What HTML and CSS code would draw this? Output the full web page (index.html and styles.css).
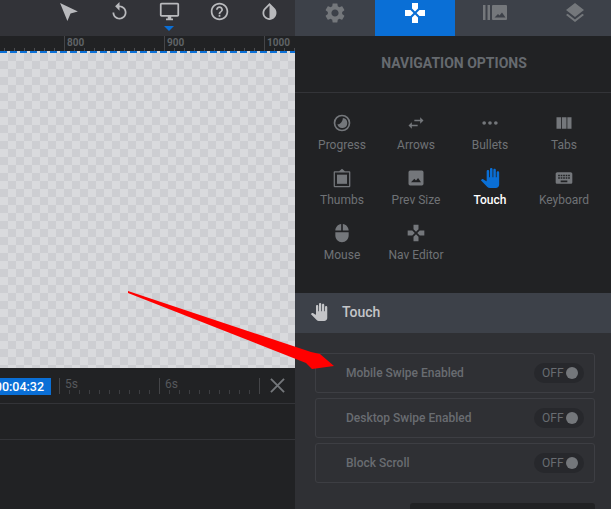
FILE: index.html
```html
<!DOCTYPE html>
<html lang="en">
<head>
    <meta charset="UTF-8">
    <title>Navigation Options</title>
    <link rel="stylesheet" href="styles.css">
</head>
<body>
<div class="app">
    <div class="stage">
        <div class="toolbar">
            <div class="tool"><svg viewBox="0 0 20 20"><polygon points="1,2 18,10 11,12 8,19"/></svg></div>
            <div class="tool"><svg viewBox="0 0 24 24"><path d="M12 5V1L7 6l5 5V7c3.31 0 6 2.69 6 6s-2.69 6-6 6-6-2.69-6-6H4c0 4.42 3.58 8 8 8s8-3.58 8-8-3.58-8-8-8z"/></svg></div>
            <div class="tool tool-active"><svg viewBox="0 0 24 24"><path d="M21 2H3c-1.1 0-2 .9-2 2v12c0 1.1.9 2 2 2h7v2H8v2h8v-2h-2v-2h7c1.1 0 2-.9 2-2V4c0-1.1-.9-2-2-2zm0 14H3V4h18v12z"/></svg></div>
            <div class="tool"><svg viewBox="0 0 24 24"><path d="M11 18h2v-2h-2v2zm1-16C6.48 2 2 6.48 2 12s4.48 10 10 10 10-4.48 10-10S17.52 2 12 2zm0 18c-4.41 0-8-3.59-8-8s3.59-8 8-8 8 3.59 8 8-3.59 8-8 8zm0-14c-2.21 0-4 1.79-4 4h2c0-1.1.9-2 2-2s2 .9 2 2c0 2-3 1.75-3 5h2c0-2.25 3-2.5 3-5 0-2.21-1.79-4-4-4z"/></svg></div>
            <div class="tool"><svg viewBox="0 0 24 24"><path d="M17.66 7.93L12 2.27 6.34 7.93c-3.12 3.12-3.12 8.19 0 11.31C7.9 20.8 9.95 21.58 12 21.58c2.05 0 4.1-.78 5.66-2.34 3.12-3.12 3.12-8.19 0-11.31zM12 19.59c-1.6 0-3.11-.62-4.24-1.76C6.62 16.69 6 15.19 6 13.59s.62-3.11 1.76-4.24L12 5.1v14.49z"/></svg></div>
        </div>
        <div class="ruler">
            <div class="ruler-cell">800</div>
            <div class="ruler-cell">900</div>
            <div class="ruler-cell">1000</div>
        </div>
        <div class="guide"></div>
        <div class="canvas"></div>
        <div class="timeline">
            <div class="time-row">
                <div class="time-badge">00:04:32</div>
                <div class="time-scale">
                    <div class="time-cell">5s</div>
                    <div class="time-cell">6s</div>
                </div>
                <svg class="time-close" viewBox="0 0 16 16"><path d="M1 1L15 15M15 1L1 15"/></svg>
            </div>
            <div class="track-row"></div>
        </div>
    </div>

    <div class="panel">
        <div class="tabs">
            <div class="tab"><svg viewBox="0 0 24 24"><path d="M19.14 12.94c.04-.3.06-.61.06-.94 0-.32-.02-.64-.07-.94l2.03-1.58c.18-.14.23-.41.12-.61l-1.92-3.32c-.12-.22-.37-.29-.59-.22l-2.39.96c-.5-.38-1.03-.7-1.62-.94l-.36-2.54c-.04-.24-.24-.41-.48-.41h-3.84c-.24 0-.43.17-.47.41l-.36 2.54c-.59.24-1.13.57-1.62.94l-2.39-.96c-.22-.08-.47 0-.59.22L2.74 8.87c-.12.21-.08.47.12.61l2.03 1.58c-.05.3-.09.63-.09.94s.02.64.07.94l-2.03 1.58c-.18.14-.23.41-.12.61l1.92 3.32c.12.22.37.29.59.22l2.39-.96c.5.38 1.03.7 1.62.94l.36 2.54c.05.24.24.41.48.41h3.84c.24 0 .44-.17.47-.41l.36-2.54c.59-.24 1.13-.56 1.62-.94l2.39.96c.22.08.47 0 .59-.22l1.92-3.32c.12-.22.07-.47-.12-.61l-2.01-1.58zM12 15.6c-1.98 0-3.6-1.62-3.6-3.6s1.62-3.6 3.6-3.6 3.6 1.62 3.6 3.6-1.62 3.6-3.6 3.6z"/></svg></div>
            <div class="tab tab-active"><svg viewBox="0 0 24 24"><path d="M15 7.5V2H9v5.5l3 3 3-3zM7.5 9H2v6h5.5l3-3-3-3zM9 16.5V22h6v-5.5l-3-3-3 3zM16.5 9l-3 3 3 3H22V9h-5.5z"/></svg></div>
            <div class="tab"><svg viewBox="0 -4 24 24"><path d="M0 0h2.500v15H0zM4.500 0H7v15H4.500zM10 0h13a1 1 0 0 1 1 1v13a1 1 0 0 1-1 1H10a1 1 0 0 1-1-1V1a1 1 0 0 1 1-1zm1.500 12.500h11l-3.500-5-2.500 3-1.500-1.500z" fill-rule="evenodd"/></svg></div>
            <div class="tab"><svg viewBox="0 0 24 24"><path d="M11.99 18.54l-7.37-5.73L3 14.07l9 7 9-7-1.63-1.27-7.38 5.74zM12 16l7.36-5.73L21 9l-9-7-9 7 1.63 1.27L12 16z"/></svg></div>
        </div>

        <div class="nav">
            <h2 class="nav-title">NAVIGATION OPTIONS</h2>
            <ul class="nav-grid">
                <li class="nav-item">
                    <svg viewBox="0 0 24 24"><path d="M12 2a10 10 0 1 0 0 20 10 10 0 0 0 0-20zm0 2a8 8 0 1 1 0 16 8 8 0 0 1 0-16z" fill-rule="evenodd"/><path d="M13 6a6 6 0 1 1-6.500 7.500C10 14 13 10 13 6z"/></svg>
                    Progress
                </li>
                <li class="nav-item">
                    <svg viewBox="0 0 24 24"><path d="M6.990 11L3 15l3.990 4v-3H14v-2H6.990v-3zM21 9l-3.990-4v3H10v2h7.010v3L21 9z"/></svg>
                    Arrows
                </li>
                <li class="nav-item">
                    <svg viewBox="0 0 24 24"><circle cx="5" cy="12" r="2.200"/><circle cx="12" cy="12" r="2.200"/><circle cx="19" cy="12" r="2.200"/></svg>
                    Bullets
                </li>
                <li class="nav-item">
                    <svg viewBox="0 0 24 24"><path d="M3 5h5.500v14H3zM9.500 5H15v14H9.500zM16 5h5v14h-5z"/></svg>
                    Tabs
                </li>
                <li class="nav-item">
                    <svg viewBox="0 0 24 24"><path d="M12 1l3.500 3H21a1 1 0 0 1 1 1v17a1 1 0 0 1-1 1H3a1 1 0 0 1-1-1V5a1 1 0 0 1 1-1h5.500zM3.500 5.500v16h17v-16z" fill-rule="evenodd"/><path d="M6 8h12v11H6z"/></svg>
                    Thumbs
                </li>
                <li class="nav-item">
                    <svg viewBox="0 0 24 24"><path d="M5 3h14a2 2 0 0 1 2 2v14a2 2 0 0 1-2 2H5a2 2 0 0 1-2-2V5a2 2 0 0 1 2-2zm1 14h12l-3.500-5-2.500 3-2-2z" fill-rule="evenodd"/></svg>
                    Prev Size
                </li>
                <li class="nav-item nav-item-active">
                    <svg viewBox="0 0 24 24"><path d="M23 5.500V20c0 2.200-1.800 4-4 4h-7.300c-1.080 0-2.100-.43-2.850-1.190L1 14.830s1.260-1.230 1.300-1.250c.22-.19.49-.29.79-.29.22 0 .42.06.6.16.04.01 4.310 2.460 4.310 2.460V4c0-.83.67-1.500 1.500-1.500S11 3.170 11 4v7h1V1.500c0-.83.67-1.500 1.500-1.500S15 .67 15 1.500V11h1V2.500c0-.83.67-1.500 1.500-1.500s1.500.67 1.500 1.500V11h1V5.500c0-.83.67-1.500 1.500-1.500s1.500.67 1.500 1.500z"/></svg>
                    Touch
                </li>
                <li class="nav-item">
                    <svg viewBox="0 0 24 24"><path d="M20 5H4c-1.100 0-1.990.9-1.990 2L2 17c0 1.100.9 2 2 2h16c1.100 0 2-.9 2-2V7c0-1.100-.9-2-2-2zm-9 3h2v2h-2V8zm0 3h2v2h-2v-2zM8 8h2v2H8V8zm0 3h2v2H8v-2zm-1 2H5v-2h2v2zm0-3H5V8h2v2zm9 7H8v-2h8v2zm0-4h-2v-2h2v2zm0-3h-2V8h2v2zm3 3h-2v-2h2v2zm0-3h-2V8h2v2z"/></svg>
                    Keyboard
                </li>
                <li class="nav-item">
                    <svg viewBox="0 0 24 24"><path d="M13 1.070V9h7c0-4.080-3.050-7.440-7-7.930zM4 15c0 4.420 3.580 8 8 8s8-3.580 8-8v-4H4v4zm7-13.930C7.050 1.560 4 4.920 4 9h7V1.070z"/></svg>
                    Mouse
                </li>
                <li class="nav-item">
                    <svg viewBox="0 0 24 24"><path d="M15 7.500V2H9v5.500l3 3 3-3zM7.500 9H2v6h5.500l3-3-3-3zM9 16.500V22h6v-5.500l-3-3-3 3zM16.500 9l-3 3 3 3H22V9h-5.500z"/></svg>
                    Nav Editor
                </li>
            </ul>
        </div>

        <div class="section-head">
            <svg viewBox="0 0 24 24"><path d="M23 5.500V20c0 2.200-1.800 4-4 4h-7.300c-1.080 0-2.100-.43-2.850-1.190L1 14.830s1.260-1.230 1.300-1.250c.22-.19.49-.29.79-.29.22 0 .42.06.6.16.04.01 4.310 2.460 4.310 2.460V4c0-.83.67-1.500 1.500-1.500S11 3.170 11 4v7h1V1.500c0-.83.67-1.500 1.500-1.500S15 .67 15 1.500V11h1V2.500c0-.83.67-1.500 1.500-1.500s1.500.67 1.500 1.500V11h1V5.500c0-.83.67-1.500 1.500-1.500s1.500.67 1.500 1.500z"/></svg>
            <span>Touch</span>
        </div>
        <div class="section-body">
            <div class="option">
                <span>Mobile Swipe Enabled</span>
                <div class="toggle">OFF<i class="knob"></i></div>
            </div>
            <div class="option">
                <span>Desktop Swipe Enabled</span>
                <div class="toggle">OFF<i class="knob"></i></div>
            </div>
            <div class="option">
                <span>Block Scroll</span>
                <div class="toggle">OFF<i class="knob"></i></div>
            </div>
            <div class="select"></div>
        </div>
    </div>

    <!-- red annotation arrow -->
    <svg class="note-arrow" viewBox="0 0 611 509"><polygon points="128,291 311,352 320,354 334,366 312,369 306,363 128,293"/></svg>
</div>
</body>
</html>
```

FILE: styles.css
```css
*{
    padding: 0;
    margin: 0;
    box-sizing: border-box;
}
body{
    background: #212224;
    font-family: Roboto, "Liberation Sans", sans-serif;
    overflow: hidden;
}
ul{
    list-style: none;
}
.app{
    position: relative;
    display: flex;
    width: 611px;
    height: 509px;
    overflow: hidden;
}

/* left side */
.stage{
    width: 295px;
    display: flex;
    flex-direction: column;
}
.toolbar{
    height: 36px;
    flex: none;
    display: flex;
    padding-left: 44px;
    background: #323338;
}
.tool{
    position: relative;
    width: 50px;
    height: 22px;
    display: flex;
    align-items: center;
    justify-content: center;
    fill: #b9babd;
}
.tool svg{
    width: 21px;
    height: 21px;
}
.tool-active::after{
    content: "";
    position: absolute;
    left: 20px;
    top: 26px;
    border: 5px solid transparent;
    border-top: 5px solid #0a6fd6;
}
.ruler{
    height: 15px;
    flex: none;
    display: flex;
    padding-left: 64px;
    background:
        repeating-linear-gradient(to right, #4a4b4f 0 1px, transparent 1px 10px) 4px 100% / 100% 3px no-repeat,
        #212224;
}
.ruler-cell{
    width: 100px;
    flex: none;
    padding-left: 2px;
    border-left: 1px solid #444548;
    font-size: 10px;
    font-weight: 700;
    line-height: 14px;
    color: #5f6266;
}
.guide{
    height: 2px;
    flex: none;
    background: repeating-linear-gradient(to right, #0a6fd6 0 7px, #d9dadd 7px 10px);
}
.canvas{
    flex: 1;
    background: repeating-conic-gradient(#cdced2 0 25%, #d9dadd 0 50%) 0 0 / 16px 16px;
}
.timeline{
    height: 141px;
    flex: none;
    background: #212224;
}
.time-row{
    height: 36px;
    display: flex;
    align-items: flex-start;
    padding-top: 10px;
    border-bottom: 1px solid #333438;
}
.time-badge{
    width: 51px;
    height: 17px;
    flex: none;
    display: flex;
    justify-content: flex-end;
    overflow: hidden;
    padding-right: 7px;
    background: #0a6fd6;
    color: #fff;
    font-size: 12.5px;
    font-weight: 500;
    line-height: 17px;
    white-space: nowrap;
}
.time-scale{
    display: flex;
    margin-left: 8px;
    height: 16px;
    width: 201px;
    flex: none;
    border-right: 1px solid #444548;
}
.time-cell{
    width: 100px;
    height: 16px;
    flex: none;
    padding-left: 5px;
    border-left: 1px solid #444548;
    font-size: 12px;
    line-height: 12px;
    color: #55585c;
    background: repeating-linear-gradient(to right, #3d3e42 0 1px, transparent 1px 10px) 9px 100% / 91px 4px no-repeat;
}
.time-close{
    width: 15px;
    height: 15px;
    margin-left: 10px;
    fill: none;
    stroke: #74777b;
    stroke-width: 2;
}
.track-row{
    height: 36px;
    border-bottom: 1px solid #333438;
}

/* right side */
.panel{
    width: 316px;
    flex: none;
    display: flex;
    flex-direction: column;
    overflow: hidden;
    background: #212224;
}
.tabs{
    height: 36px;
    flex: none;
    display: flex;
    background: #3d4149;
}
.tab{
    width: 80px;
    height: 36px;
    flex: none;
    padding-top: 1px;
    display: flex;
    justify-content: center;
    fill: #74777b;
}
.tab svg{
    width: 24px;
    height: 24px;
}
.tab-active{
    background: #0a6fd6;
    fill: #fff;
}
.nav{
    height: 257px;
    flex: none;
}
.nav-title{
    height: 57px;
    padding-left: 2px;
    border-bottom: 1px solid #333438;
    font-size: 14px;
    font-weight: 700;
    line-height: 54px;
    text-align: center;
    color: #666a6f;
}
.nav-grid{
    display: grid;
    grid-template-columns: repeat(4, 74px);
    grid-auto-rows: 40px;
    row-gap: 15px;
    padding: 20px 0 0 10px;
}
.nav-item{
    display: flex;
    flex-direction: column;
    align-items: center;
    gap: 4px;
    font-size: 12px;
    line-height: 16px;
    color: #6f7276;
    fill: #74777b;
    white-space: nowrap;
}
.nav-item svg{
    width: 20px;
    height: 20px;
}
.nav-item-active{
    color: #fff;
    font-weight: 500;
    fill: #0a6fd6;
}
.section-head{
    height: 40px;
    flex: none;
    display: flex;
    align-items: center;
    padding: 0 0 2px 15px;
    background: #3d4149;
    font-size: 14px;
    font-weight: 500;
    color: #c4c5c8;
    fill: #c4c5c8;
}
.section-head svg{
    width: 18px;
    height: 18px;
    margin-right: 14px;
}
.section-body{
    flex: 1;
    display: flex;
    flex-direction: column;
    gap: 5px;
    padding: 20px 16px 0 20px;
    background: #2f3034;
}
.option{
    height: 40px;
    flex: none;
    display: flex;
    align-items: center;
    justify-content: space-between;
    padding: 0 10px 0 30px;
    border: 1px solid #3d3e43;
    border-radius: 3px;
    font-size: 12px;
    font-weight: 500;
    color: #696c71;
}
.toggle{
    width: 50px;
    height: 20px;
    display: flex;
    align-items: center;
    justify-content: space-between;
    padding: 0 6px 0 8px;
    border-radius: 10px;
    background: #27282c;
    font-size: 12px;
    font-weight: 400;
    color: #696c71;
}
.knob{
    width: 12px;
    height: 12px;
    border-radius: 50%;
    background: #74777b;
}
.select{
    width: 185px;
    height: 30px;
    flex: none;
    margin: 15px 0 0 95px;
    border-radius: 3px;
    background: #212224;
}
.note-arrow{
    position: absolute;
    left: 0;
    top: 0;
    width: 611px;
    height: 509px;
    fill: #ff0000;
}
```
